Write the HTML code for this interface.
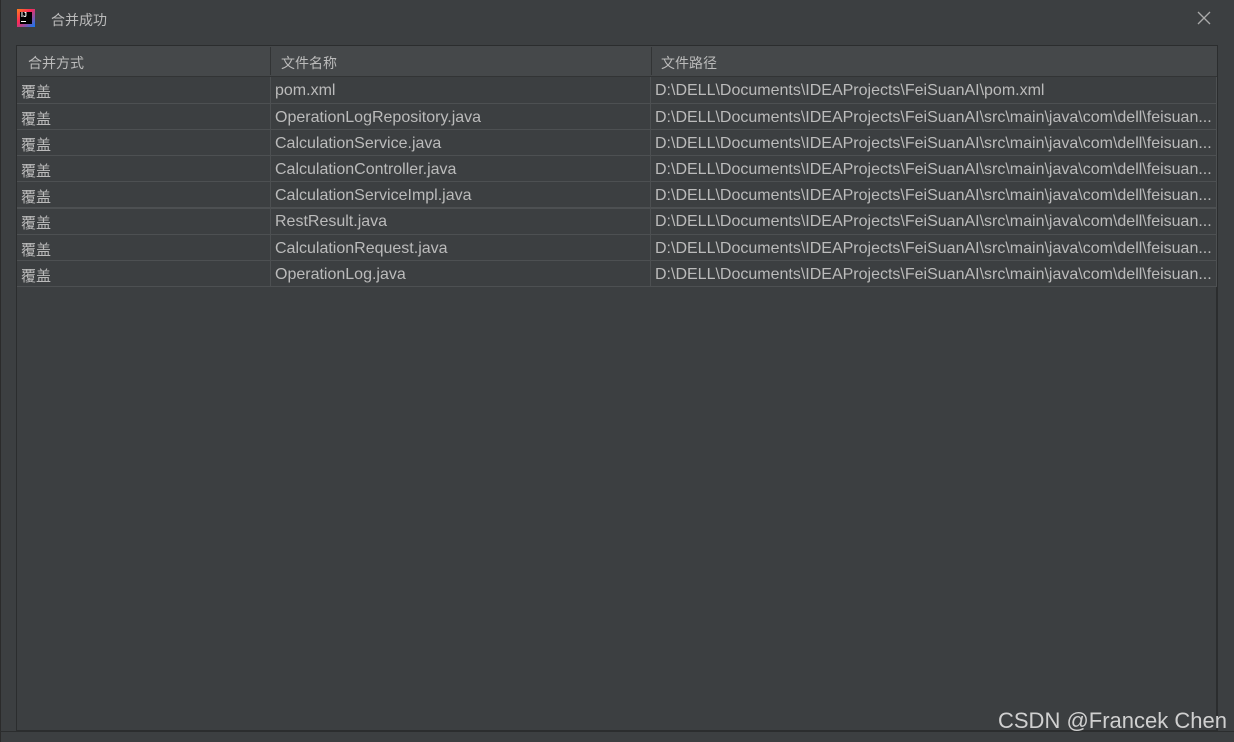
<!DOCTYPE html><html><head><style>
body{margin:0;width:1234px;height:742px;background:#3c3f41;overflow:hidden;position:relative;font-family:"Liberation Sans","Noto Sans CJK SC",sans-serif;color:#bbbbbb}
.abs{position:absolute}
.t{position:absolute;font-size:15px;white-space:nowrap}
.l{font-size:16px}
</style></head><body>
<div class="abs" style="left:0;top:0;width:1px;height:742px;background:#2b2b2b"></div>
<div class="abs" style="left:17px;top:9px;width:18px;height:18px;background:linear-gradient(135deg,#fc801d,#fe2857 40%,#087cfa);"></div>
<div class="abs" style="left:20px;top:12px;width:12px;height:12px;background:#000"></div>
<div class="abs" style="left:21px;top:12px;color:#fff;font-size:7px;font-weight:bold">IJ</div>
<div class="abs" style="left:21px;top:21px;width:5px;height:1px;background:#fff"></div>
<div class="t" style="left:51px;top:10px;font-size:14px">合并成功</div>
<svg class="abs" style="left:1197px;top:11px" width="14" height="14"><path d="M1 1L13 13M13 1L1 13" stroke="#aaa" stroke-width="1.3"/></svg>
<div class="abs" style="left:16px;top:45px;width:1201px;height:686px;border:1px solid #2b2d2e;box-sizing:border-box;background:#3c3f41"></div>
<div class="abs" style="left:17px;top:46px;width:1200px;height:30px;background:#45484a;border-bottom:1px solid #323435"></div>
<div class="abs" style="left:270px;top:47px;width:1px;height:28px;background:#323435"></div>
<div class="abs" style="left:651px;top:47px;width:1px;height:28px;background:#323435"></div>
<div class="t" style="left:28px;top:53px;font-size:14px">合并方式</div>
<div class="t" style="left:281px;top:53px;font-size:14px">文件名称</div>
<div class="t" style="left:661px;top:53px;font-size:14px">文件路径</div>
<div id="rows"></div>
<div class="abs" style="left:1217px;top:45px;width:1px;height:686px;background:#2b2d2e"></div>
<div class="abs" style="left:0;top:731px;width:1234px;height:1px;background:#2b2d2e"></div>
<div class="t" style="left:998px;top:708px;font-size:22px;color:#d0d0d0">CSDN @Francek Chen</div>
<script>
var names=["pom.xml","OperationLogRepository.java","CalculationService.java","CalculationController.java","CalculationServiceImpl.java","RestResult.java","CalculationRequest.java","OperationLog.java"];
var tops=[77,104,130,156,182,208,235,261,287];
var h="",p="D:\\DELL\\Documents\\IDEAProjects\\FeiSuanAI\\src\\main\\java\\com\\dell\\feisuan...";
for(var i=0;i<8;i++){var y=tops[i],y2=tops[i+1];
h+='<div class="abs" style="left:17px;top:'+(y2-1)+'px;width:1200px;height:'+(i==4?2:1)+'px;background:#4d5052"></div>';
h+='<div class="abs" style="left:270px;top:'+y+'px;width:1px;height:'+(y2-y)+'px;background:#4d5052"></div>';
h+='<div class="abs" style="left:650px;top:'+y+'px;width:1px;height:'+(y2-y)+'px;background:#4d5052"></div>';
h+='<div class="t" style="left:21px;top:'+(y+4)+'px">覆盖</div>';
h+='<div class="t l" style="left:275px;top:'+(y+5)+'px">'+names[i]+'</div>';
h+='<div class="t l" style="left:655px;top:'+(y+5)+'px">'+(i==0?"D:\\DELL\\Documents\\IDEAProjects\\FeiSuanAI\\pom.xml":p)+'</div>';}
h+='<div class="abs" style="left:1216px;top:77px;width:1px;height:210px;background:#4d5052"></div>';
document.getElementById("rows").innerHTML=h;
</script>
</body></html>
